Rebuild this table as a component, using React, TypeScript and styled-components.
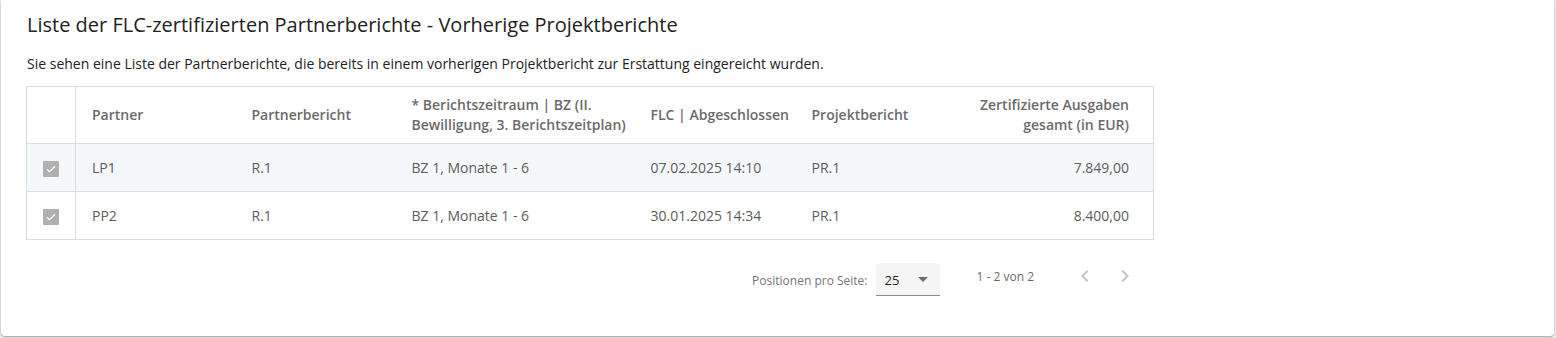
import React from "react";
import styled, { createGlobalStyle } from "styled-components";

const Global = createGlobalStyle`
  html, body { margin: 0; padding: 0; background: #eeeeee; }
  body { font-family: "Open Sans", "Noto Sans", sans-serif; }
`;

const Page = styled.div`
  padding: 0 2px 2px 1px;
`;

const Card = styled.section`
  box-sizing: border-box;
  height: 336px;
  background: #ffffff;
  border-radius: 0 0 4px 4px;
  box-shadow: 0 1px 2px rgba(0, 0, 0, 0.35);
  padding: 11px 25px 0 25px;
`;

const Title = styled.h2`
  margin: 0;
  font-size: 20px;
  font-weight: 400;
  line-height: 28px;
  color: #222;
  padding-left: 1px;
`;

const Intro = styled.p`
  margin: 16px 0 13px 0;
  font-size: 14px;
  line-height: 18px;
  color: #222;
  padding-left: 1px;
`;

const Table = styled.table`
  width: 1127px;
  border-collapse: collapse;
  table-layout: fixed;
  border: 1px solid #d9dde2;
`;

const HeadCell = styled.th<{ $w: number; $right?: boolean; $first?: boolean }>`
  width: ${(p) => p.$w}px;
  box-sizing: border-box;
  height: 57px;
  padding: ${(p) => (p.$first ? "0" : p.$right ? "0 24px 0 16px" : "0 8px 0 16px")};
  text-align: ${(p) => (p.$right ? "right" : "left")};
  font-size: 14px;
  font-weight: 600;
  line-height: 20px;
  color: #6b6b6b;
  white-space: nowrap;
  border-bottom: 1px solid #d9dde2;
  border-right: ${(p) => (p.$first ? "1px solid #d9dde2" : "none")};
  vertical-align: middle;
`;

const Row = styled.tr<{ $shaded?: boolean }>`
  background: ${(p) => (p.$shaded ? "#f5f8fb" : "#ffffff")};
`;

const Cell = styled.td<{ $right?: boolean; $first?: boolean }>`
  height: 48px;
  box-sizing: border-box;
  padding: ${(p) => (p.$first ? "0" : p.$right ? "0 24px 0 16px" : "0 8px 0 16px")};
  text-align: ${(p) => (p.$right ? "right" : p.$first ? "center" : "left")};
  font-size: 14px;
  line-height: 20px;
  color: #5c5c5c;
  border-bottom: 1px solid #d9dde2;
  border-right: ${(p) => (p.$first ? "1px solid #d9dde2" : "none")};
  vertical-align: middle;
`;

const Check = styled.span`
  display: inline-flex;
  align-items: center;
  justify-content: center;
  width: 16px;
  height: 16px;
  background: #b0b0b0;
  border-radius: 1px;
  vertical-align: middle;
`;

const Paginator = styled.div`
  width: 1127px;
  display: flex;
  justify-content: flex-end;
  align-items: center;
  height: 56px;
  margin-top: 8px;
  font-size: 12px;
  color: #757575;
`;

const PageSizeLabel = styled.span`
  margin-right: 8px;
  margin-top: 8px;
`;

const Select = styled.div`
  box-sizing: border-box;
  width: 64px;
  height: 33px;
  background: #f5f5f5;
  border-radius: 4px 4px 0 0;
  border-bottom: 1px solid #8a8a8a;
  display: flex;
  align-items: center;
  justify-content: space-between;
  padding: 2px 12px 0 9px;
  font-size: 13px;
  color: #222;
  margin-top: 6px;
`;

const Arrow = styled.span`
  width: 0;
  height: 0;
  border-left: 5px solid transparent;
  border-right: 5px solid transparent;
  border-top: 5px solid #6e6e6e;
`;

const Range = styled.span`
  margin: 0 31px 0 37px;
  font-size: 12px;
  color: #6b6b6b;
`;

const NavButton = styled.button`
  width: 40px;
  height: 40px;
  border: none;
  background: transparent;
  padding: 0;
  display: flex;
  align-items: center;
  justify-content: center;
`;

const NavGroup = styled.div`
  display: flex;
  margin-right: 8px;
`;

const Chevron = ({ dir }: { dir: "left" | "right" }) => (
  <svg width="24" height="24" viewBox="0 0 24 24">
    <path
      d={dir === "left" ? "M15.4 7.4 14 6l-6 6 6 6 1.4-1.4L10.8 12z" : "M8.6 7.4 10 6l6 6-6 6-1.4-1.4L13.2 12z"}
      fill="#c4c4c4"
    />
  </svg>
);

const rows = [
  { p: "LP1", pb: "R.1", bz: "BZ 1, Monate 1 - 6", flc: "07.02.2025 14:10", pr: "PR.1", sum: "7.849,00" },
  { p: "PP2", pb: "R.1", bz: "BZ 1, Monate 1 - 6", flc: "30.01.2025 14:34", pr: "PR.1", sum: "8.400,00" },
];

export default function App() {
  return (
    <>
      <Global />
      <Page>
        <Card>
          <Title>Liste der FLC-zertifizierten Partnerberichte - Vorherige Projektberichte</Title>
          <Intro>
            Sie sehen eine Liste der Partnerberichte, die bereits in einem vorherigen Projektbericht zur Erstattung
            eingereicht wurden.
          </Intro>
          <Table>
            <thead>
              <tr>
                <HeadCell $w={49} $first />
                <HeadCell $w={160}>Partner</HeadCell>
                <HeadCell $w={160}>Partnerbericht</HeadCell>
                <HeadCell $w={239}>
                  * Berichtszeitraum | BZ (II.
                  <br />
                  Bewilligung, 3. Berichtszeitplan)
                </HeadCell>
                <HeadCell $w={161}>FLC | Abgeschlossen</HeadCell>
                <HeadCell $w={165}>Projektbericht</HeadCell>
                <HeadCell $w={193} $right>
                  Zertifizierte Ausgaben
                  <br />
                  gesamt (in EUR)
                </HeadCell>
              </tr>
            </thead>
            <tbody>
              {rows.map((r, i) => (
                <Row key={r.p} $shaded={i === 0}>
                  <Cell $first>
                    <Check>
                      <svg width="12" height="12" viewBox="0 0 24 24">
                        <path d="M4 12.5l5 5L20 6.5" fill="none" stroke="#ffffff" strokeWidth="2.4" />
                      </svg>
                    </Check>
                  </Cell>
                  <Cell>{r.p}</Cell>
                  <Cell>{r.pb}</Cell>
                  <Cell>{r.bz}</Cell>
                  <Cell>{r.flc}</Cell>
                  <Cell>{r.pr}</Cell>
                  <Cell $right>{r.sum}</Cell>
                </Row>
              ))}
            </tbody>
          </Table>
          <Paginator>
            <PageSizeLabel>Positionen pro Seite:</PageSizeLabel>
            <Select>
              <span>25</span>
              <Arrow />
            </Select>
            <Range>1 - 2 von 2</Range>
            <NavGroup>
              <NavButton aria-label="Vorherige Seite">
                <Chevron dir="left" />
              </NavButton>
              <NavButton aria-label="Nächste Seite">
                <Chevron dir="right" />
              </NavButton>
            </NavGroup>
          </Paginator>
        </Card>
      </Page>
    </>
  );
}
